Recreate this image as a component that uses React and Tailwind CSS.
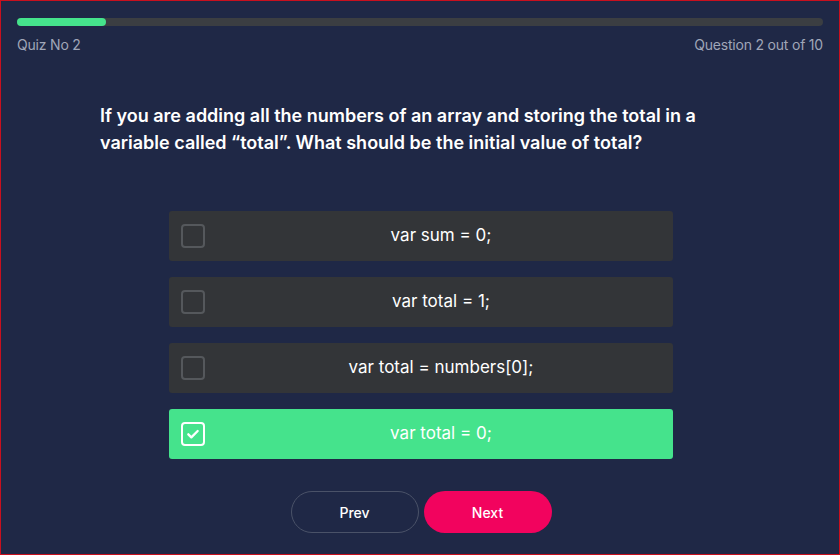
import { useState } from 'react';

const options = ['var sum = 0;', 'var total = 1;', 'var total = numbers[0];', 'var total = 0;'];

function CheckBox({ checked }) {
  if (checked) {
    return (
      <span className="w-6 h-6 rounded-[4px] border-2 border-white flex items-center justify-center">
        <svg viewBox="0 0 24 24" className="w-4 h-4" fill="none" stroke="white" strokeWidth="3.5" strokeLinecap="round" strokeLinejoin="round">
          <path d="M5 12.5l4.5 4.5L19 7.5" />
        </svg>
      </span>
    );
  }
  return <span className="w-6 h-6 rounded-[4px] border-2 border-[#55585c]" />;
}

export default function App() {
  const [selected, setSelected] = useState(3);

  return (
    <div className="w-[840px] h-[555px] bg-[#1f2846] border border-[#c8101e] flex flex-col text-white" style={{ fontFamily: 'Inter, "Open Sans", sans-serif' }}>
      <div className="px-4 pt-[17px]">
        <div className="h-2 rounded-full bg-[#3b3e42]">
          <div className="h-2 w-[89px] rounded-full bg-[#45e38c]" />
        </div>
        <div className="flex justify-between mt-2 text-[14px] text-[#a0a6b8] tracking-[-0.2px]">
          <span>Quiz No 2</span>
          <span>Question 2 out of 10</span>
        </div>
      </div>

      <p className="ml-[99px] mt-[47px] w-[600px] text-[18px] leading-[27px] font-semibold">
        If you are adding all the numbers of an array and storing the total in a variable called “total”. What should be the initial value of total?
      </p>

      <div className="flex flex-col gap-4 mt-[55px] ml-[168px] w-[504px]">
        {options.map((opt, i) => (
          <button
            key={i}
            onClick={() => setSelected(i)}
            className={`h-[50px] rounded-[3px] flex items-center px-3 text-[17px] ${selected === i ? 'bg-[#45e38c]' : 'bg-[#333538]'}`}
          >
            <CheckBox checked={selected === i} />
            <span className="flex-1 text-center pl-4">{opt}</span>
          </button>
        ))}
      </div>

      <div className="flex justify-center gap-[5px] mt-8 ml-[2px]">
        <button className="w-[128px] h-[42px] rounded-full border border-[#4a5268] text-[14px] font-medium">Prev</button>
        <button className="w-[128px] h-[42px] rounded-full bg-[#f2035e] text-[14px] font-medium">Next</button>
      </div>
    </div>
  );
}
